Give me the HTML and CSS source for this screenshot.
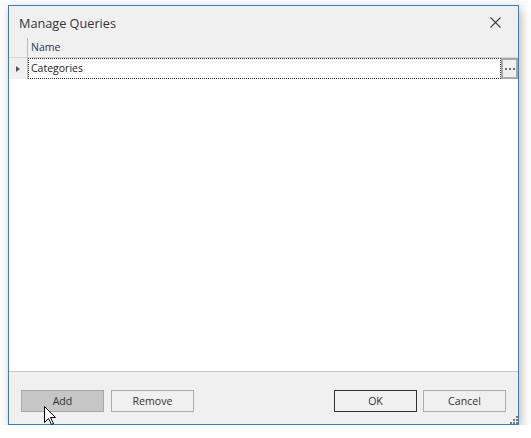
FILE: index.html
```html
<!DOCTYPE html>
<html>
<head>
<meta charset="utf-8">
<link rel="stylesheet" href="styles.css">
</head>
<body>
<div class="window">
  <div class="titlebar">
    <span class="title">Manage Queries</span>
    <span class="close">
      <svg width="11" height="11" viewBox="0 0 11 11"><path d="M0.5 0.5 L10.5 10.5 M10.5 0.5 L0.5 10.5" stroke="#404040" stroke-width="1.1" fill="none"/></svg>
    </span>
  </div>
  <div class="grid">
    <div class="grid-head">
      <div class="ind"></div>
      <div class="col">Name</div>
    </div>
    <div class="grid-row">
      <div class="ind"><span class="arrow"></span></div>
      <div class="cell">Categories</div>
      <div class="ellipsis"><i></i><i></i><i></i></div>
    </div>
  </div>
  <div class="footer">
    <button class="btn btn-hot">Add</button>
    <button class="btn">Remove</button>
    <span class="spacer"></span>
    <button class="btn btn-default">OK</button>
    <button class="btn">Cancel</button>
  </div>
  <svg class="cursor" width="13" height="20" viewBox="0 0 13 20">
    <path d="M0.5 0.5 L0.5 16.5 L4.5 12.5 L7.5 18.5 L9.5 17.5 L6.5 11.5 L11.5 11.5 Z" fill="#fff" stroke="#000" stroke-width="1" stroke-linejoin="miter"/>
  </svg>
  <svg class="grip" width="8" height="8" viewBox="0 0 8 8">
    <rect x="6" y="0" width="2" height="2" fill="#7a7a7a"/>
    <rect x="3" y="3" width="2" height="2" fill="#7a7a7a"/>
    <rect x="6" y="3" width="2" height="2" fill="#7a7a7a"/>
    <rect x="0" y="6" width="2" height="2" fill="#7a7a7a"/>
    <rect x="3" y="6" width="2" height="2" fill="#7a7a7a"/>
    <rect x="6" y="6" width="2" height="2" fill="#7a7a7a"/>
  </svg>
</div>
</body>
</html>
```

FILE: styles.css
```css
html, body {
  margin: 0;
  padding: 0;
  background: #ffffff;
}
body {
  padding: 5px 0 0 8px;
  font-family: "Open Sans", "Noto Sans", sans-serif;
}
.window {
  position: relative;
  width: 509px;
  height: 418px;
  border: 1px solid #2a80d2;
  background: #f0f0f0;
  box-shadow: 2px 3px 10px rgba(0, 0, 0, 0.28);
  display: flex;
  flex-direction: column;
}
.titlebar {
  height: 32px;
  display: flex;
  align-items: center;
  padding: 0 17px 0 10px;
  box-sizing: border-box;
}
.title {
  flex: 1;
  font-size: 12.7px;
  color: #333333;
  padding-top: 2px;
}
.close {
  width: 11px;
  height: 11px;
  display: flex;
  margin-top: 1px;
}
.grid {
  flex: 1;
  background: #ffffff;
  display: flex;
  flex-direction: column;
}
.grid-head {
  height: 19px;
  display: flex;
  background: #f0f0f0;
  border-bottom: 1px solid #d4d4d4;
}
.grid-head .ind {
  width: 18px;
  border-right: 1px solid #bdbdbd;
}
.col {
  padding-left: 3px;
  font-size: 10.5px;
  line-height: 19px;
  color: #1f3550;
}
.grid-row {
  height: 21px;
  display: flex;
}
.grid-row .ind {
  width: 18px;
  background: #f0f0f0;
  border-right: 1px solid #bdbdbd;
  display: flex;
  align-items: center;
  justify-content: center;
}
.arrow {
  width: 0;
  height: 0;
  border-left: 4px solid #555555;
  border-top: 3.5px solid transparent;
  border-bottom: 3.5px solid transparent;
  margin-left: 0;
}
.cell {
  flex: 1;
  border: 1px dotted #333333;
  box-sizing: border-box;
  padding-left: 2px;
  font-size: 10.5px;
  line-height: 18px;
  color: #222222;
}
.ellipsis {
  width: 17px;
  box-sizing: border-box;
  border: 2px solid #a8a8a8;
  background: #f0f0f0;
  display: flex;
  align-items: center;
  justify-content: center;
  gap: 2px;
}
.ellipsis i {
  width: 2px;
  height: 2px;
  background: #6e6e6e;
}
.footer {
  border-top: 1px solid #c8c8c8;
  display: flex;
  align-items: flex-start;
  padding: 18px 12px 0;
  box-sizing: border-box;
  height: 53px;
  gap: 6px;
}
.spacer {
  flex: 1;
}
.btn {
  width: 83px;
  height: 22px;
  margin: 0;
  padding: 0;
  border: 1px solid #adadad;
  background: #f0f0f0;
  font-family: "Open Sans", "Noto Sans", sans-serif;
  font-size: 10.6px;
  color: #333333;
}
.btn-hot {
  background: #c6c6c6;
  border-color: #a8a8a8;
  margin-right: 1px;
}
.btn-default {
  border-color: #333333;
}
.cursor {
  position: absolute;
  left: 35px;
  top: 400px;
}
.grip {
  position: absolute;
  right: 0;
  bottom: 0;
}
```
